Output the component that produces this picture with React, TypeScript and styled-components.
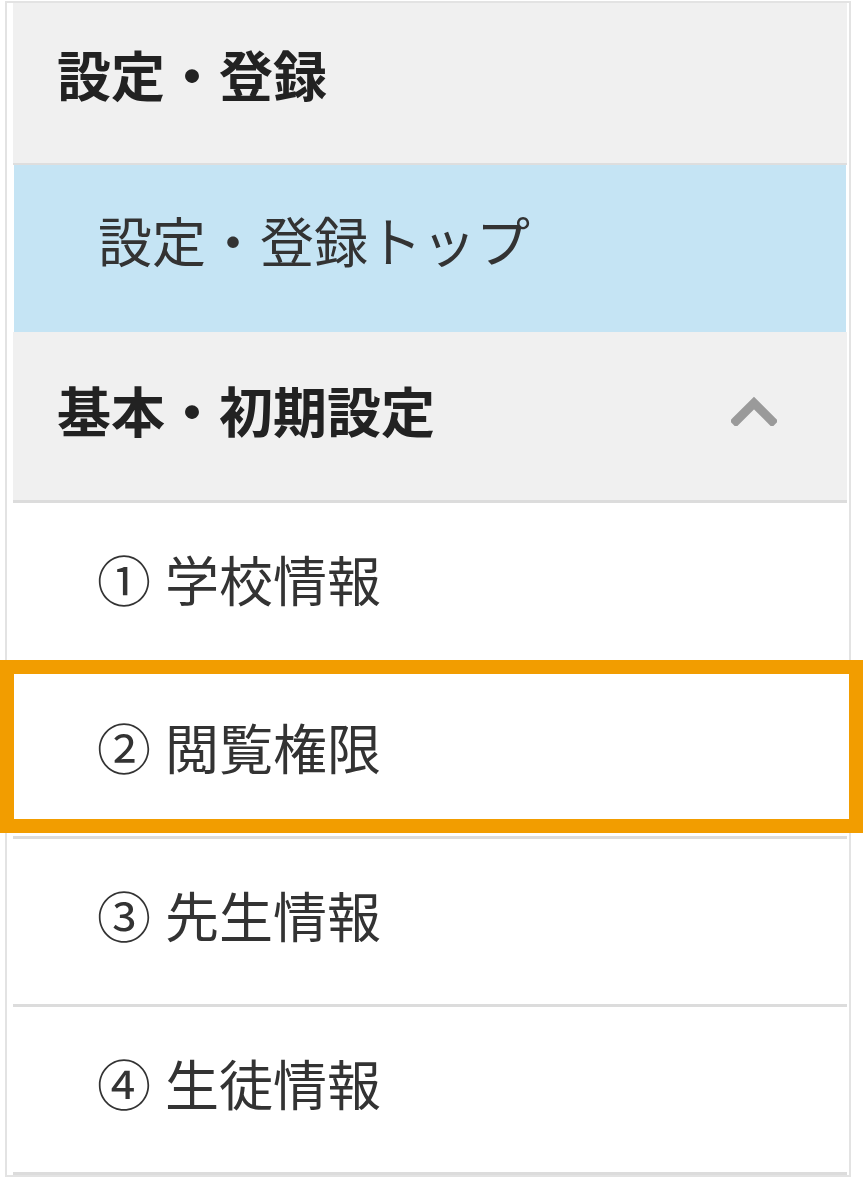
import React from "react";
import styled, { createGlobalStyle } from "styled-components";

const GlobalStyle = createGlobalStyle`
  html, body {
    margin: 0;
    padding: 0;
    background: #ffffff;
  }
  body {
    font-family: "Noto Sans CJK JP", "Noto Sans", sans-serif;
    color: #333333;
  }
`;

const Page = styled.div`
  position: relative;
  width: 863px;
  height: 1181px;
  padding: 1px 0 0 5px;
  box-sizing: border-box;
  overflow: hidden;
`;

const Sidebar = styled.nav`
  width: 846px;
  box-sizing: border-box;
  border: 2px solid #e3e3e3;
  padding: 0 2px 0 6px;
  background: #ffffff;
  display: flex;
  flex-direction: column;
`;

const SectionTitle = styled.div`
  height: 162px;
  box-sizing: border-box;
  background: #f0f0f0;
  display: flex;
  align-items: center;
  padding: 0 0 20px 44px;
  font-size: 54px;
  font-weight: 700;
  color: #222222;
  border-bottom: 2px solid #dedede;
`;

const NavLink = styled.a<{ $active?: boolean }>`
  height: 167px;
  box-sizing: border-box;
  display: flex;
  align-items: center;
  padding: 0 0 18px 84px;
  margin: 0 1px;
  background: ${(p) => (p.$active ? "#c5e4f4" : "#ffffff")};
  font-size: 54px;
  color: #333333;
  text-decoration: none;
`;

const GroupHeader = styled.button`
  height: 171px;
  box-sizing: border-box;
  display: flex;
  align-items: center;
  justify-content: space-between;
  padding: 0 70px 14px 44px;
  background: #f0f0f0;
  border: none;
  border-bottom: 3px solid #dcdcdc;
  font-family: inherit;
  font-size: 54px;
  font-weight: 700;
  color: #222222;
  text-align: left;
`;

const Chevron = styled.svg`
  width: 46px;
  height: 30px;
  flex: none;
  margin-top: 4px;
`;

const ItemList = styled.ul`
  list-style: none;
  margin: 0;
  padding: 0;
  display: flex;
  flex-direction: column;
`;

const Item = styled.li`
  height: 168px;
  box-sizing: border-box;
  border-bottom: 3px solid #dcdcdc;
  display: flex;
  align-items: center;
  padding: 0 0 14px 84px;
  font-size: 54px;
  color: #333333;
  background: #ffffff;
`;

const Num = styled.span`
  margin-right: 14px;
`;

const Highlight = styled.div`
  position: absolute;
  left: 0;
  top: 660px;
  width: 863px;
  height: 173px;
  box-sizing: border-box;
  border: 14px solid #f29d00;
  pointer-events: none;
`;

const items = [
  { n: "①", label: "学校情報" },
  { n: "②", label: "閲覧権限" },
  { n: "③", label: "先生情報" },
  { n: "④", label: "生徒情報" },
];

export default function App() {
  return (
    <>
      <GlobalStyle />
      <Page>
        <Sidebar>
          <SectionTitle>設定・登録</SectionTitle>
          <NavLink $active href="#">設定・登録トップ</NavLink>
          <GroupHeader type="button">
            <span>基本・初期設定</span>
            <Chevron viewBox="0 0 46 30">
              <polyline
                points="5,25 23,7 41,25"
                fill="none"
                stroke="#9a9a9a"
                strokeWidth="9"
                strokeLinecap="square"
                strokeLinejoin="miter"
              />
            </Chevron>
          </GroupHeader>
          <ItemList>
            {items.map((it) => (
              <Item key={it.label}>
                <Num>{it.n}</Num>
                {it.label}
              </Item>
            ))}
          </ItemList>
        </Sidebar>
        <Highlight />
      </Page>
    </>
  );
}
